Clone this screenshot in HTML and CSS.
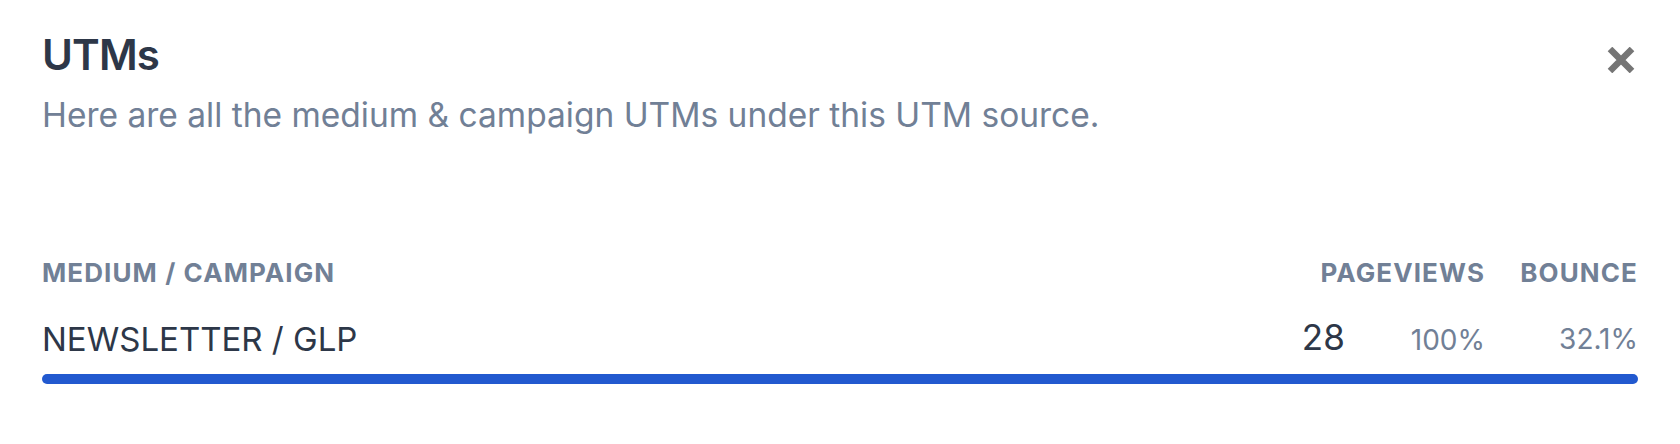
FILE: index.html
```html
<!DOCTYPE html>
<html lang="en">
<head>
<meta charset="utf-8">
<title>UTMs</title>
<link rel="stylesheet" href="styles.css">
</head>
<body>
<div class="modal">
  <div class="modal-head">
    <h1 class="title">UTMs</h1>
    <button class="close" aria-label="Close">
      <svg width="28" height="26" viewBox="0 0 28 26" aria-hidden="true">
        <path d="M3 2 L25 24 M25 2 L3 24" stroke="#757575" stroke-width="6.5" fill="none"/>
      </svg>
    </button>
  </div>
  <p class="subtitle">Here are all the medium &amp; campaign UTMs under this UTM source.</p>

  <div class="table">
    <div class="thead">
      <div class="col-name">Medium / Campaign</div>
      <div class="col-views">Pageviews</div>
      <div class="col-bounce">Bounce</div>
    </div>
    <div class="row">
      <div class="row-cells">
        <div class="col-name name">NEWSLETTER / GLP</div>
        <div class="col-views views"><span class="count">28</span><span class="pct">100%</span></div>
        <div class="col-bounce pct">32.1%</div>
      </div>
      <div class="bar-track"><div class="bar" style="width:100%"></div></div>
    </div>
  </div>
</div>
</body>
</html>
```

FILE: styles.css
```css
* { box-sizing: border-box; }
html, body { margin: 0; padding: 0; background: #ffffff; }
body {
  font-family: Inter, "Noto Sans", "Liberation Sans", sans-serif;
  color: #2d3748;
}
.modal {
  padding: 30px 42px 0 42px;
}
.modal-head {
  display: flex;
  justify-content: space-between;
  align-items: flex-start;
}
.title {
  margin: 0;
  font-size: 42px;
  line-height: 50px;
  font-weight: 600;
  letter-spacing: -0.02em;
  color: #2d3748;
}
.close {
  border: 0;
  background: none;
  padding: 0;
  margin: 17px 3px 0 0;
  width: 28px;
  height: 26px;
  display: block;
  cursor: pointer;
}
.close svg { display: block; }
.subtitle {
  margin: 13px 0 0 0;
  font-size: 33.5px;
  line-height: 44px;
  color: #718096;
}
.table {
  margin-top: 120px;
}
.thead, .row-cells {
  display: flex;
  align-items: center;
  gap: 34px;
}
.col-name { flex: 1; }
.col-views { width: 180px; text-align: right; }
.col-bounce { width: 119px; text-align: right; }
.thead {
  font-size: 26px;
  line-height: 32px;
  font-weight: 700;
  color: #718096;
  text-transform: uppercase;
  letter-spacing: 0.042em;
}
.row { margin-top: 26px; }
.name {
  font-size: 33px;
  line-height: 44px;
  color: #2d3748;
}
.views {
  display: flex;
  justify-content: flex-end;
  align-items: baseline;
  gap: 66px;
}
.count {
  font-size: 35px;
  line-height: 44px;
  color: #2d3748;
}
.pct {
  font-size: 28px;
  line-height: 44px;
  color: #718096;
}
.bar-track {
  margin-top: 12px;
  height: 10px;
}
.bar {
  height: 10px;
  background: #2259cf;
  border-radius: 5px;
}
```
